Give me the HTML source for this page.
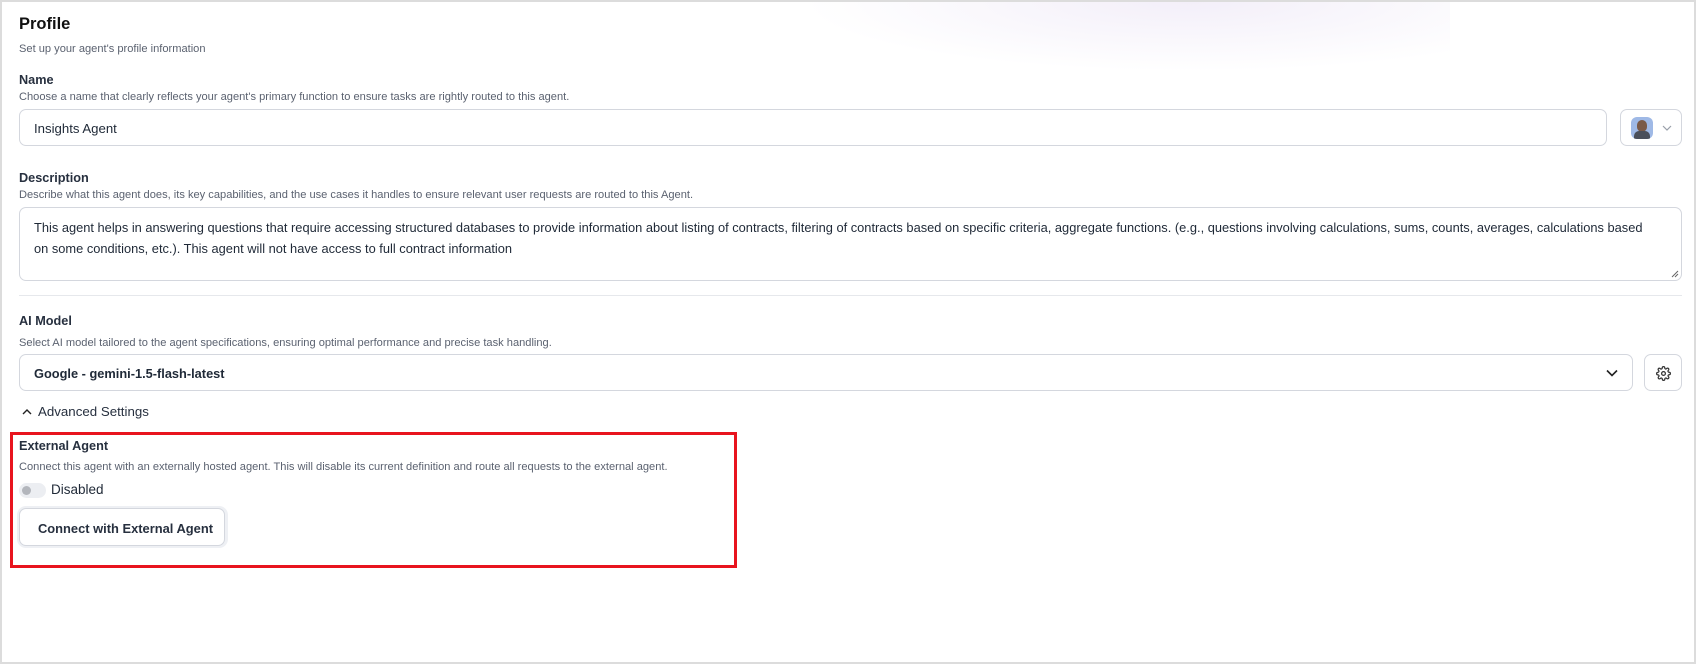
<!DOCTYPE html>
<html><head><style>
*{box-sizing:border-box;margin:0;padding:0}
body{width:1696px;height:664px;background:#fff;font-family:"Liberation Sans",sans-serif;color:#1f2937;position:relative;overflow:hidden}
.frame{position:absolute;left:0;top:0;width:1696px;height:664px;border:2px solid #dcdcdc}
.glow{position:absolute;left:800px;top:2px;width:650px;height:70px;background:radial-gradient(ellipse at 60% 0%,rgba(235,228,245,.6),rgba(255,255,255,0) 70%)}
.a{position:absolute;white-space:nowrap}
.t{font-size:16.5px;font-weight:bold;color:#111}
.l{font-size:12.7px;font-weight:bold;color:#27303f}
.h{font-size:11.1px;color:#5b6270}
.box{position:absolute;border:1px solid #d4d7de;border-radius:7px;background:#fff}
.v{font-size:13.2px;color:#1f2937}
</style></head><body>
<div class="frame"></div>
<div class="glow"></div>
<div class="a t" style="left:19px;top:15px">Profile</div>
<div class="a h" style="left:19px;top:43px">Set up your agent's profile information</div>
<div class="a l" style="left:19px;top:73px">Name</div>
<div class="a h" style="left:19px;top:91px">Choose a name that clearly reflects your agent's primary function to ensure tasks are rightly routed to this agent.</div>
<div class="box" style="left:19px;top:109px;width:1588px;height:37px"><span class="a v" style="left:14px;top:11px">Insights Agent</span></div>
<div class="box" style="left:1620px;top:109px;width:62px;height:37px">
<div style="position:absolute;left:10px;top:7px;width:22px;height:22px;border-radius:6px;background:#9fb9e6;overflow:hidden"><div style="position:absolute;left:6px;top:3px;width:10px;height:12px;border-radius:5px;background:#7a5a48"></div><div style="position:absolute;left:3px;top:14px;width:16px;height:10px;border-radius:5px 5px 0 0;background:#4a4f5a"></div></div>
<svg style="position:absolute;left:41px;top:15px" width="10" height="7" viewBox="0 0 10 7"><path d="M1 1l4 4 4-4" fill="none" stroke="#9aa0aa" stroke-width="1.2"/></svg></div>
<div class="a l" style="left:19px;top:171px">Description</div>
<div class="a h" style="left:19px;top:189px">Describe what this agent does, its key capabilities, and the use cases it handles to ensure relevant user requests are routed to this Agent.</div>
<div class="box" style="left:19px;top:207px;width:1663px;height:74px">
<div style="position:absolute;left:14px;top:9px;right:14px;font-size:12.85px;line-height:21px;color:#1f2937;white-space:nowrap">This agent helps in answering questions that require accessing structured databases to provide information about listing of contracts, filtering of contracts based on specific criteria, aggregate functions. (e.g., questions involving calculations, sums, counts, averages, calculations based<br>on some conditions, etc.). This agent will not have access to full contract information</div>
<svg style="position:absolute;right:2px;bottom:2px" width="9" height="9" viewBox="0 0 9 9"><path d="M8 2L2 8M8 5L5 8" stroke="#666" stroke-width="1"/></svg></div>
<div class="a" style="left:19px;top:295px;width:1663px;height:1px;background:#e6e8ec"></div>
<div class="a l" style="left:19px;top:314px">AI Model</div>
<div class="a h" style="left:19px;top:337px">Select AI model tailored to the agent specifications, ensuring optimal performance and precise task handling.</div>
<div class="box" style="left:19px;top:354px;width:1614px;height:37px"><span class="a v" style="left:14px;top:11px;font-weight:bold;font-size:12.8px">Google - gemini-1.5-flash-latest</span>
<svg style="position:absolute;right:14px;top:14px" width="12" height="8" viewBox="0 0 12 8"><path d="M1 1.5l5 5 5-5" fill="none" stroke="#222" stroke-width="1.6"/></svg></div>
<div class="box" style="left:1644px;top:354px;width:38px;height:37px">
<svg style="position:absolute;left:11px;top:11px" width="15" height="15" viewBox="0 0 24 24" fill="none" stroke="#333" stroke-width="2"><circle cx="12" cy="12" r="3"/><path d="M19.4 15a1.7 1.7 0 0 0 .3 1.8l.1.1a2 2 0 1 1-2.8 2.8l-.1-.1a1.7 1.7 0 0 0-1.8-.3 1.7 1.7 0 0 0-1 1.5V21a2 2 0 1 1-4 0v-.1a1.7 1.7 0 0 0-1.1-1.5 1.7 1.7 0 0 0-1.8.3l-.1.1a2 2 0 1 1-2.8-2.8l.1-.1a1.7 1.7 0 0 0 .3-1.8 1.7 1.7 0 0 0-1.5-1H3a2 2 0 1 1 0-4h.1a1.7 1.7 0 0 0 1.5-1.1 1.7 1.7 0 0 0-.3-1.8l-.1-.1a2 2 0 1 1 2.8-2.8l.1.1a1.7 1.7 0 0 0 1.8.3H9a1.7 1.7 0 0 0 1-1.5V3a2 2 0 1 1 4 0v.1a1.7 1.7 0 0 0 1 1.5 1.7 1.7 0 0 0 1.8-.3l.1-.1a2 2 0 1 1 2.8 2.8l-.1.1a1.7 1.7 0 0 0-.3 1.8V9a1.7 1.7 0 0 0 1.5 1H21a2 2 0 1 1 0 4h-.1a1.7 1.7 0 0 0-1.5 1z"/></svg></div>
<svg class="a" style="left:22px;top:408px" width="10" height="7" viewBox="0 0 10 7"><path d="M1 6l4-4 4 4" fill="none" stroke="#222" stroke-width="1.4"/></svg>
<div class="a" style="left:38px;top:404px;font-size:13.3px;color:#27303f">Advanced Settings</div>
<div class="a" style="left:10px;top:432px;width:727px;height:136px;border:3px solid #e8141e"></div>
<div class="a l" style="left:19px;top:439px">External Agent</div>
<div class="a h" style="left:19px;top:461px">Connect this agent with an externally hosted agent. This will disable its current definition and route all requests to the external agent.</div>
<div class="a" style="left:19px;top:483px;width:27px;height:15px;border-radius:8px;background:#eceef2"><div style="position:absolute;left:3px;top:3px;width:9px;height:9px;border-radius:50%;background:#b3b6bc"></div></div>
<div class="a" style="left:51px;top:482px;font-size:13.5px;color:#1f2937">Disabled</div>
<div class="a" style="left:17px;top:506px;width:211px;height:42px;border-radius:9px;background:#eef0f4"></div>
<div class="box" style="left:19px;top:508px;width:206px;height:38px;border-radius:7px"><span class="a" style="left:18px;top:12px;font-size:12.9px;font-weight:bold;color:#27303f">Connect with External Agent</span></div>
</body></html>
